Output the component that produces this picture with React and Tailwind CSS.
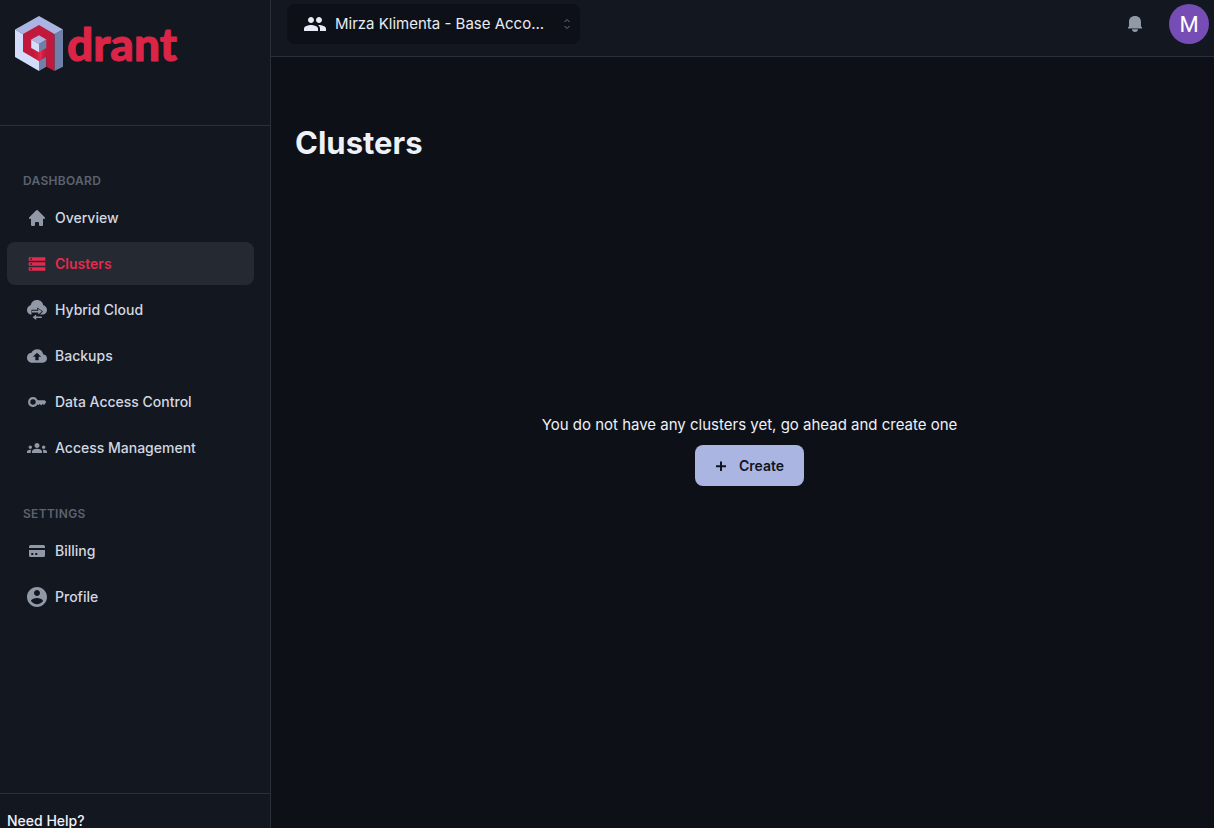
import React from "react";
import { HiHome } from "react-icons/hi";
import { MdStorage, MdBackup, MdGroups, MdPeople } from "react-icons/md";

function LogoMark() {
  return (
    <svg viewBox="0 0 48 55" className="h-[55px] w-12" aria-hidden="true">
      <defs>
        <linearGradient id="qdrant-shade" x1="0" x2="1" y1="0" y2="0">
          <stop offset="0" stopColor="#c0193c" stopOpacity="0" />
          <stop offset="0.6" stopColor="#e52c50" />
          <stop offset="1" stopColor="#c0193c" stopOpacity="0" />
        </linearGradient>
      </defs>
      <path d="M24 0 48 13.500 24 27 0 13.500Z" fill="#aab5e2" />
      <path d="M0 13.500 24 27V55L0 41Z" fill="#d3dcfb" />
      <path d="M39.400 18 48 13.500V50.700L39.400 55Z" fill="#7180a8" />
      <path d="M24 44.700 31.300 40.500V50.700L24 55Z" fill="#7180a8" />
      <path d="M24 9 39.400 18V55L31.300 50.700V40.700L24 44.900 8 35.700V18Z" fill="#c0193c" />
      <path d="M17 32.500 24 36 31.300 32.500V40.700L24 44.900 17 40.900Z" fill="url(#qdrant-shade)" />
      <path d="M24 19.200 31.300 23.500 24 28 16.200 23.500Z" fill="#aab5e2" />
      <path d="M16.200 23.500 24 28V36.300L16.200 32Z" fill="#d3dcfb" />
      <path d="M24 28 31.300 23.500V32L24 36.300Z" fill="#7180a8" />
    </svg>
  );
}

function HybridCloudIcon(props) {
  return (
    <svg viewBox="0 0 20 20" fill="currentColor" {...props}>
      <path d="M10 0C6.700 0 4.200 2.200 3.700 5.300 1.600 5.800 0 7.600 0 9.900c0 2.500 2 4.600 4.500 4.600h11c2.500 0 4.500-2.100 4.500-4.600 0-2.300-1.600-4.100-3.700-4.600C15.800 2.200 13.300 0 10 0Z" />
      <path d="M4.500 9.800h5.800V7.500l5.700 4-3.400 3.400h2.900v1H4.500Z" fill="#131720" />
      <path d="M5 10.800h6.300V8.700l3.600 2.900-3.600 2.900v-2.100H5Z" />
      <path d="M14.800 16.500H9.200v-1.900L5.600 17.300l3.600 2.700v-1.900h5.600Z" />
    </svg>
  );
}

function KeyIcon(props) {
  return (
    <svg viewBox="0 0 20 20" fill="currentColor" {...props}>
      <path
        fillRule="evenodd"
        d="M6 5a5 5 0 0 1 4.600 3.300h7.100L19.300 10l-2.200 3-1.500-1-1.400 1.400-1.500-1.400-1.300 1.200-.8-1A5 5 0 1 1 6 5Zm0 2.300a2.700 2.700 0 1 0 0 5.400 2.700 2.700 0 0 0 0-5.400Z"
      />
    </svg>
  );
}

function CardIcon(props) {
  return (
    <svg viewBox="0 0 20 20" fill="currentColor" {...props}>
      <path d="M3.500 4h13A1.500 1.500 0 0 1 18 5.500V7H2V5.500A1.500 1.500 0 0 1 3.500 4Z" />
      <path
        fillRule="evenodd"
        d="M2 9h16v5.500a1.500 1.500 0 0 1-1.500 1.500h-13A1.500 1.500 0 0 1 2 14.500Zm2.300 3v2h2v-2Zm4 0v2h2v-2Z"
      />
    </svg>
  );
}

function ProfileIcon(props) {
  return (
    <svg viewBox="2 2 20 20" fill="currentColor" {...props}>
      <path d="M12 2C6.480 2 2 6.480 2 12s4.480 10 10 10 10-4.480 10-10S17.520 2 12 2zm0 3c1.660 0 3 1.340 3 3s-1.340 3-3 3-3-1.340-3-3 1.340-3 3-3zm0 14.200c-2.500 0-4.710-1.280-6-3.220.03-1.990 4-3.080 6-3.080 1.990 0 5.970 1.090 6 3.080-1.290 1.940-3.500 3.220-6 3.220z" />
    </svg>
  );
}

function BellIcon(props) {
  return (
    <svg viewBox="0 0 16 16" fill="currentColor" {...props}>
      <path d="M8 0C4.300 0 2 2.400 2 5.700V10.500L1 11.200V12.500h14v-1.300l-1-.7V5.700C14 2.400 11.700 0 8 0Z" />
      <path d="M5 13.300h6A3 2.800 0 0 1 8 16a3 2.800 0 0 1-3-2.700Z" />
    </svg>
  );
}

const sections = [
  {
    title: "Dashboard",
    items: [
      { label: "Overview", icon: HiHome },
      { label: "Clusters", icon: MdStorage, active: true },
      { label: "Hybrid Cloud", icon: HybridCloudIcon },
      { label: "Backups", icon: MdBackup },
      { label: "Data Access Control", icon: KeyIcon },
      { label: "Access Management", icon: MdGroups },
    ],
  },
  {
    title: "Settings",
    items: [
      { label: "Billing", icon: CardIcon },
      { label: "Profile", icon: ProfileIcon },
    ],
  },
];

function NavItem({ label, icon: Icon, active }) {
  return (
    <li>
      <a
        href="#"
        aria-current={active ? "page" : undefined}
        className={
          active
            ? "flex items-center gap-2 rounded-lg bg-[#252932] py-[11px] pl-5 text-sm leading-[21px] font-semibold text-[#e5294e]"
            : "flex items-center gap-2 rounded-lg py-[11px] pl-5 text-sm leading-[21px] font-medium text-[#d3d7e0]"
        }
      >
        <Icon className={active ? "size-5 shrink-0" : "size-5 shrink-0 text-[#9299a6]"} aria-hidden="true" />
        {label}
      </a>
    </li>
  );
}

function Sidebar() {
  return (
    <aside className="flex w-[271px] shrink-0 flex-col border-r border-[#2a2f3b] bg-[#131720]">
      <div className="border-b border-[#2a2f3b] px-[15px] pt-4 pb-[54px]">
        <a href="#" aria-label="Qdrant home" className="flex items-center gap-1">
          <LogoMark />
          <svg className="h-[55px] w-40" aria-hidden="true">
            <text
              x="0"
              y="45"
              fill="#dc2446"
              stroke="#dc2446"
              strokeWidth="1"
              strokeLinejoin="round"
              className="font-['Lato'] text-[46px] font-black"
            >
              drant
            </text>
          </svg>
        </a>
      </div>
      <nav className="flex flex-1 flex-col gap-9 pt-[46px] pr-4 pl-[7px]">
        {sections.map((section) => (
          <section key={section.title}>
            <h2 className="pb-1.5 pl-4 text-xs leading-[18px] font-semibold tracking-wide text-[#5c6370] uppercase">
              {section.title}
            </h2>
            <ul className="flex flex-col gap-[3px]">
              {section.items.map((item) => (
                <NavItem key={item.label} {...item} />
              ))}
            </ul>
          </section>
        ))}
      </nav>
      <div className="h-[35px] overflow-hidden border-t border-[#2a2f3b] px-[7px] pt-4">
        <h2 className="text-sm leading-[22px] font-medium text-[#eef1f8]">Need Help?</h2>
      </div>
    </aside>
  );
}

function Header() {
  return (
    <header className="flex items-start justify-between border-b border-[#2a2f3b] bg-[#131720] pt-1 pr-[5px] pb-3 pl-4">
      <button
        type="button"
        className="flex h-10 w-[293px] items-center rounded-lg bg-[#0d1017] pr-2 pl-4 text-left text-[15px] leading-6 text-[#e8ebf5]"
      >
        <MdPeople className="mr-2 size-6 shrink-0" aria-hidden="true" />
        <span className="flex-1 whitespace-nowrap">Mirza Klimenta - Base Acco...</span>
        <svg viewBox="0 0 10 12" className="ml-3 h-3 w-2.5 shrink-0" fill="none" stroke="#6b7280" aria-hidden="true">
          <path d="M2.500 4 5 1.500 7.500 4M2.500 8 5 10.500 7.500 8" />
        </svg>
      </button>
      <div className="flex items-center gap-[26px]">
        <button type="button" aria-label="Notifications" className="text-[#9299a6]">
          <BellIcon className="size-4" aria-hidden="true" />
        </button>
        <button
          type="button"
          aria-label="Account"
          className="flex size-10 items-center justify-center rounded-full bg-[#754db5] font-['Roboto'] text-[22px] text-white"
        >
          M
        </button>
      </div>
    </header>
  );
}

export default function App() {
  return (
    <div className="flex h-screen overflow-hidden bg-[#0d1017] font-['Inter',sans-serif] text-[#eef1f8]">
      <Sidebar />
      <div className="flex min-w-0 flex-1 flex-col">
        <Header />
        <main className="flex flex-1 flex-col pt-16 pr-2.5 pl-6">
          <h1 className="text-[31px] leading-[44px] font-bold">Clusters</h1>
          <div className="flex flex-col items-center gap-2 pt-[248px]">
            <p className="text-[15px] leading-6">You do not have any clusters yet, go ahead and create one</p>
            <button
              type="button"
              className="flex items-center gap-3 rounded-lg bg-[#aab5e2] px-5 py-2.5 text-sm leading-[21px] font-semibold text-[#10141d]"
            >
              <svg viewBox="0 0 12 12" className="size-3" stroke="currentColor" strokeWidth="2" aria-hidden="true">
                <path d="M6 1.500V11M1 6.300H11" />
              </svg>
              Create
            </button>
          </div>
        </main>
      </div>
    </div>
  );
}
